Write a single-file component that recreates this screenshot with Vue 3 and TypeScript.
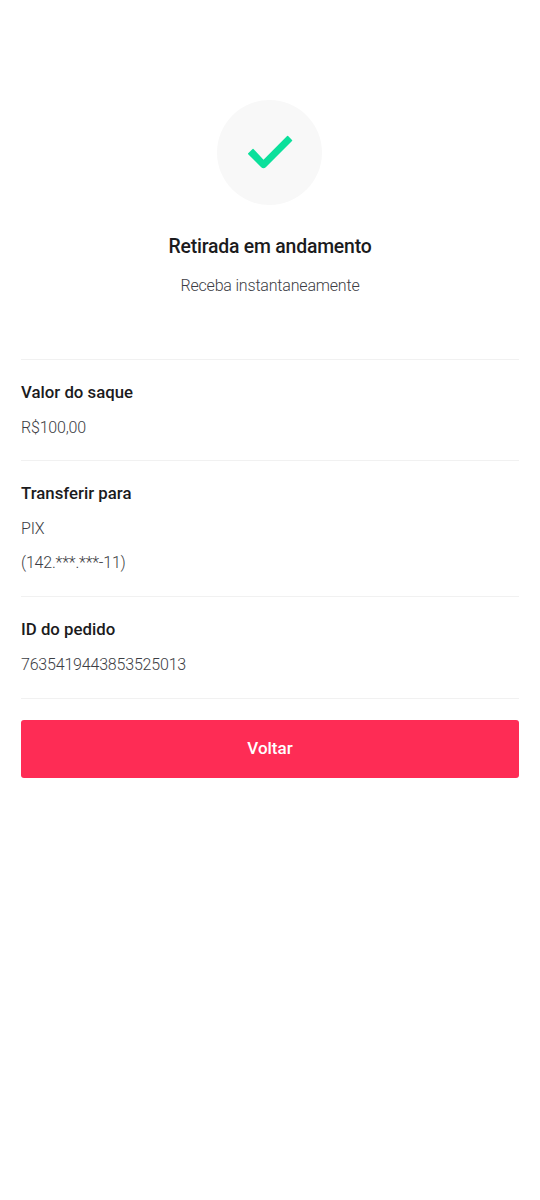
<script setup lang="ts">
interface Detail {
  label: string
  values: string[]
}

const details: Detail[] = [
  { label: 'Valor do saque', values: ['R$100,00'] },
  { label: 'Transferir para', values: ['PIX', '(142.***.***-11)'] },
  { label: 'ID do pedido', values: ['7635419443853525013'] },
]
</script>

<template>
  <main class="page">
    <header class="status">
      <div class="badge">
        <svg width="105" height="105" viewBox="0 0 105 105" aria-hidden="true">
          <path
            d="M35.6 48.9 L31.2 53.2 Q30.7 53.7 31.2 54.2 L44.2 67.2 Q46.5 69.2 48.8 67.2 L75 41.1 Q75.5 40.6 75 40.1 L71.1 36.1 Q70.6 35.6 70.1 36.1 L46.5 59.8 L36.5 48.9 Q36 48.4 35.6 48.9 Z"
            fill="#0be09b"
          />
        </svg>
      </div>
      <h1 class="title">Retirada em andamento</h1>
      <p class="subtitle">Receba instantaneamente</p>
    </header>

    <dl class="details">
      <div v-for="item in details" :key="item.label" class="detail">
        <dt>{{ item.label }}</dt>
        <dd v-for="value in item.values" :key="value">{{ value }}</dd>
      </div>
    </dl>

    <button class="back" type="button">Voltar</button>
  </main>
</template>

<style>
body {
  background: #fff;
}
</style>

<style scoped>
.page {
  box-sizing: border-box;
  min-height: 1200px;
  padding: 99.5px 21px 0;
  background: #fff;
  color: #161823;
  font-family: Roboto, "Noto Sans", sans-serif;
}

.status {
  display: flex;
  flex-direction: column;
  align-items: flex-start;
  height: 259.4px;
}

.badge {
  width: 105px;
  height: 105px;
  margin-left: 196.2px;
  border-radius: 50%;
  background: #f8f8f8;
}

.badge svg {
  display: block;
}

.title {
  width: 100%;
  margin: 28px 0 0;
  font-size: 19.4px;
  font-weight: 500;
  line-height: 28px;
  letter-spacing: -0.2px;
  text-align: center;
  color: #1b1b1d;
}

.subtitle {
  width: 100%;
  margin: 11.2px 0 0;
  font-size: 16px;
  font-weight: 300;
  line-height: 28px;
  letter-spacing: -0.19px;
  text-align: center;
  color: #3c3d44;
}

.details {
  margin: 0;
  border-bottom: 1px solid #f1f1f1;
}

.detail {
  padding: 15px 0 15.5px;
  border-top: 1px solid #f1f1f1;
}

dt,
dd {
  margin: 0;
}

dt {
  margin-bottom: 1.7px;
  font-size: 16.8px;
  font-weight: 500;
  line-height: 34px;
  color: #1b1b1d;
}

dd {
  font-size: 16px;
  font-weight: 300;
  line-height: 34.3px;
  letter-spacing: -0.19px;
  color: #3c3d44;
}

.back {
  display: block;
  width: 100%;
  height: 58px;
  margin: 21px 0 0;
  padding: 0 0 1.4px;
  border: 0;
  border-radius: 3px;
  background: #fe2c55;
  color: #fff;
  font-family: inherit;
  font-size: 17px;
  font-weight: 500;
}
</style>
